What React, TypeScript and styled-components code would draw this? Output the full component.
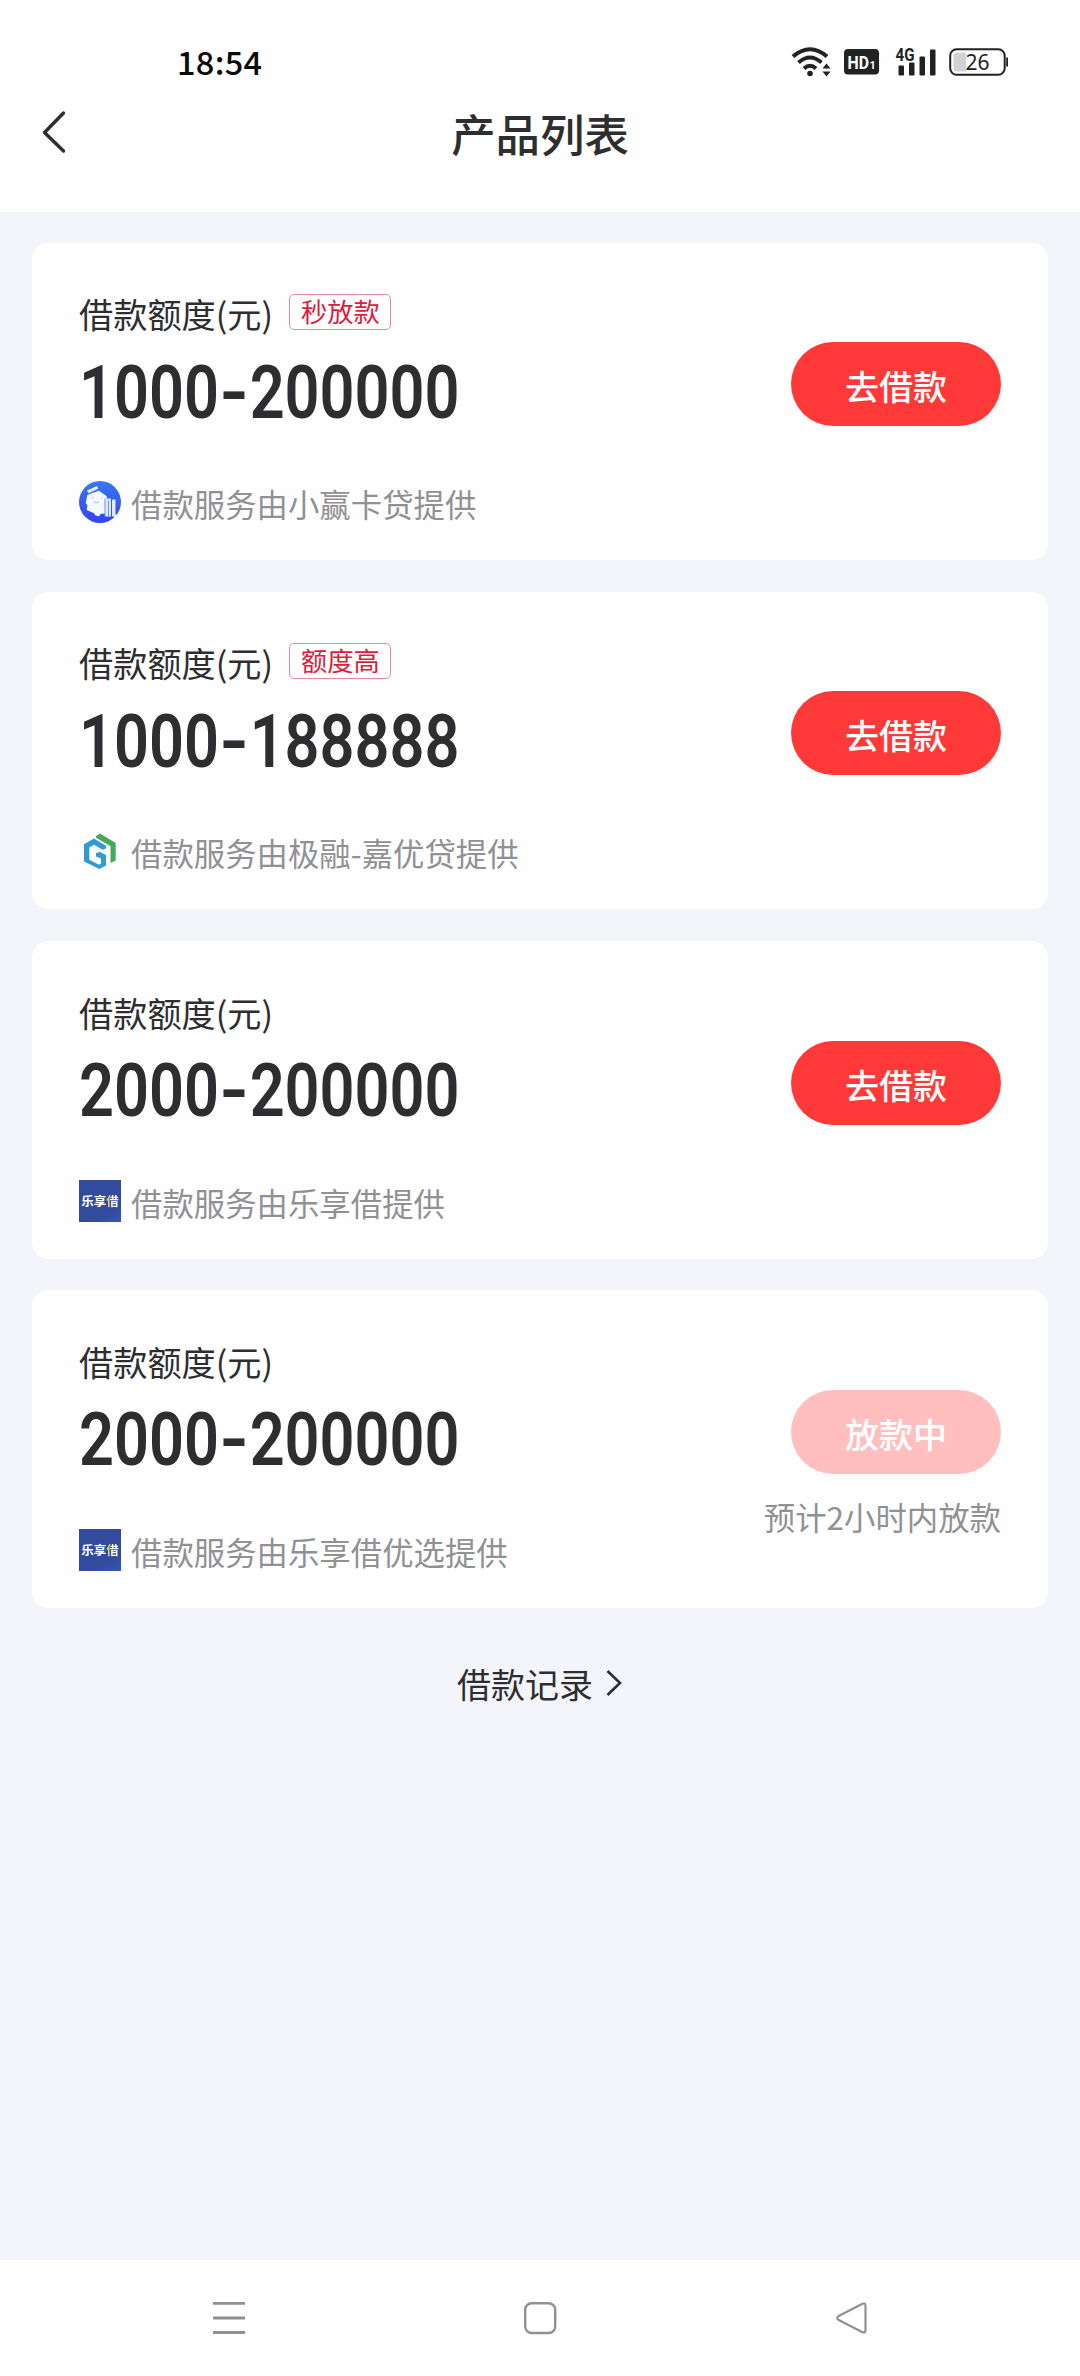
import React from "react";
import styled, { createGlobalStyle } from "styled-components";

const GlobalStyle = createGlobalStyle`
  *, *::before, *::after { box-sizing: border-box; }
  body {
    margin: 0;
    background: #f4f5fa;
    color: #2e2e31;
    font-family: "Noto Sans CJK SC", "Noto Sans", sans-serif;
  }
`;

const Screen = styled.div`
  display: flex;
  flex-direction: column;
  width: 1080px;
  height: 2376px;
  background: #f4f5fa;
`;

const Top = styled.header`
  height: 211.5px;
  background: #fefefe;
`;

const StatusBar = styled.div`
  display: flex;
  align-items: center;
  justify-content: space-between;
  height: 90px;
  padding: 34px 71px 0 177px;
`;

const Clock = styled.span`
  margin-bottom: 3px;
  font: 500 32.5px/40px "Noto Sans CJK SC", sans-serif;
  color: #0b0b0b;
  letter-spacing: 0.3px;
`;

const StatusIcons = styled.div`
  display: flex;
  align-items: center;
  & > svg { overflow: visible; }
`;

const NavHeader = styled.div`
  display: grid;
  grid-template-columns: 120px 1fr 120px;
  align-items: center;
  height: 86px;
`;

const BackButton = styled.button`
  display: flex;
  padding: 0 0 2px 40px;
  border: 0;
  background: none;
`;

const Title = styled.h1`
  margin: 0;
  text-align: center;
  font-size: 44.4px;
  line-height: 86px;
  font-weight: 500;
`;

const List = styled.main`
  flex: 1;
  display: flex;
  flex-direction: column;
  gap: 31.7px;
  padding: 31px 32px 0;
`;

const Card = styled.section`
  display: flex;
  justify-content: space-between;
  height: 317.6px;
  padding: 0 47px;
  border-radius: 16px;
  background: #fefefe;
`;

const Info = styled.div`
  padding-top: 51.5px;
`;

const LabelRow = styled.div`
  display: flex;
  align-items: flex-start;
  gap: 16.3px;
  height: 40px;
`;

const Label = styled.span`
  font-size: 34.2px;
  line-height: 38px;
`;

const Badge = styled.span`
  width: 102px;
  height: 36px;
  border: 1px solid #e58a9c;
  border-radius: 5px;
  text-align: center;
  color: #dd1c3c;
  font-size: 26.3px;
  line-height: 32px;
`;

const Amount = styled.div`
  display: flex;
  width: 380px;
  margin-top: 22.5px;
  font: 650 74.5px/72px Roboto, sans-serif;
  white-space: nowrap;
  transform: scaleX(0.822);
  transform-origin: left center;
`;

const Dash = styled.span`
  margin: 0 5px;
  transform: scaleX(1.28);
`;

const Provider = styled.div`
  display: flex;
  align-items: flex-start;
  gap: 10px;
  height: 42px;
  margin-top: 52.5px;
  color: #919194;
`;

const ProviderText = styled.span`
  font-size: 31.4px;
  line-height: 45px;
  white-space: nowrap;
`;

const Action = styled.div`
  display: flex;
  flex-direction: column;
  align-items: flex-end;
  padding-top: 99.5px;
`;

const Pill = styled.button<{ $pending?: boolean }>`
  width: 210px;
  height: 84px;
  padding: 3px 0 0;
  border: 0;
  border-radius: 42px;
  background: ${(p) => (p.$pending ? "#ffbfbf" : "#ff3938")};
  color: #fff;
  font: 500 34px/81px "Noto Sans CJK SC", sans-serif;
`;

const Note = styled.span`
  margin-top: 21px;
  color: #919194;
  font-size: 31.4px;
  line-height: 44px;
`;

const Records = styled.a`
  display: flex;
  align-items: center;
  justify-content: center;
  gap: 13px;
  height: 50px;
  margin-top: 19px;
  padding-right: 1px;
  font-size: 34px;
  line-height: 50px;
  & > svg { margin-bottom: 2px; }
`;

const SystemNav = styled.nav`
  display: flex;
  justify-content: space-between;
  height: 116px;
  padding: 40px 211px 0;
  background: #fefefe;
`;

const TextLogo = styled.span`
  display: flex;
  align-items: center;
  justify-content: center;
  width: 42px;
  height: 42px;
  background: linear-gradient(150deg, #324b9d 75%, #3559ba);
  color: #fff;
  font-size: 12.5px;
  font-weight: 700;
  line-height: 42px;
`;

const Accent = styled.span`
  background: linear-gradient(100deg, #d9d94a 36%, #fff 37%);
  background-clip: text;
  color: transparent;
`;

const WifiIcon = () => (
  <svg width="40" height="32" viewBox="0 0 40 32" fill="none" stroke="#222" strokeWidth="4">
    <path d="M2 10.5Q19 -4 36 10.5" />
    <path d="M7.5 16.5Q19 6.5 30.5 16.5" />
    <path d="M13 22.5Q19 17 25 22.5" />
    <circle cx="19" cy="27.5" r="2.8" fill="#222" stroke="none" />
    <path d="M35.5 17.5l4 5h-8zM35.5 30.5l4-5h-8z" fill="#222" stroke="none" />
  </svg>
);

const HdIcon = () => (
  <svg width="35" height="26" viewBox="0 0 35 26">
    <rect width="35" height="25.5" rx="4" fill="#222" />
    <text x="3.5" y="19.5" fontFamily="Roboto" fontWeight="700" fontSize="18.5" fill="#fff" textLength="21.5" lengthAdjust="spacingAndGlyphs">HD</text>
    <text x="25.5" y="19.5" fontFamily="Roboto" fontWeight="700" fontSize="11" fill="#fff">1</text>
  </svg>
);

const SignalIcon = () => (
  <svg width="42" height="30" viewBox="0 0 42 30" fill="#222">
    <text x="0.5" y="13.5" fontFamily="Roboto" fontWeight="700" fontSize="17.5" textLength="19" lengthAdjust="spacingAndGlyphs">4G</text>
    <rect x="3.5" y="18.5" width="5.5" height="10" rx="1" />
    <rect x="14" y="15.5" width="5.5" height="13" rx="1" />
    <rect x="24.5" y="9.5" width="5.5" height="19" rx="1" />
    <rect x="35" y="2.5" width="5.5" height="26" rx="1" />
  </svg>
);

const BatteryIcon = () => (
  <svg width="60" height="28" viewBox="0 0 60 28">
    <rect x="1.2" y="1.2" width="54.5" height="25.6" rx="6.5" fill="none" stroke="#222" strokeWidth="2" />
    <path d="M17 4.5H8a3.5 3.5 0 0 0-3.5 3.5v12a3.5 3.5 0 0 0 3.5 3.5h9z" fill="#d2d2d2" />
    <path d="M57.2 9.5h1.8v9h-1.8z" fill="#222" />
    <text x="16.5" y="21.5" fontFamily="Noto Sans" fontSize="21" fill="#222">26</text>
  </svg>
);

const HouseLogo = () => (
  <svg width="42" height="42" viewBox="0 0 42 42">
    <defs>
      <linearGradient id="houseBlue" x1="0" y1="0" x2="0" y2="1">
        <stop offset="0" stopColor="#3878ee" />
        <stop offset="1" stopColor="#3442ee" />
      </linearGradient>
    </defs>
    <circle cx="21" cy="21" r="21" fill="url(#houseBlue)" />
    <path d="M8 9.5l10-4.5 1.2 2.7-9.7 4.6z" fill="#e9f1ff" />
    <path d="M9 14.5L20 10.5 27 15.5 26.5 32H21.5L19.5 34.5 16.5 33.5 15.5 31.5 8.5 28.5 9.3 24 7.5 22z" fill="#f4f8ff" stroke="#f4f8ff" strokeWidth="1.5" strokeLinejoin="round" />
    <path d="M14.5 20.5q2 2.5 5.5.5M22 17.5l1.5-.8M13 16.8l1.5-.3" fill="none" stroke="#a9bdf6" strokeWidth="1" />
    <path d="M26 17.5h6v18h-6zM33 18.5h3.5v17H33z" fill="#dfe9ff" />
    <path d="M26 17.5v18M29.5 20v15" stroke="#6d92f2" strokeWidth="1" />
    <path d="M36.5 33.5h3l-3 2.5h-2z" fill="#e9f1ff" />
  </svg>
);

const HexLogo = () => (
  <svg width="42" height="42" viewBox="0 0 42 42">
    <path d="M17 6L21 3.5 36.7 13V30.5L31.5 33V16.2L17 7.8z" fill="#45a95b" />
    <path d="M14.8 8.5L27 15.8V18.5L23.5 19.8 15 14.7 10.3 17.5V29.8L20 34.7 22 33.5V28.5L17 26.5V23L21 22 27 25V35.5L20.5 39 5 31.5V14.2z" fill="#309cd2" />
  </svg>
);

const WordLogo = () => (
  <TextLogo>
    乐享<Accent>借</Accent>
  </TextLogo>
);

interface Product {
  amount: [string, string];
  tag?: string;
  provider: string;
  Logo: React.FC;
  pending?: boolean;
}

const products: Product[] = [
  { amount: ["1000", "200000"], tag: "秒放款", provider: "小赢卡贷", Logo: HouseLogo },
  { amount: ["1000", "188888"], tag: "额度高", provider: "极融-嘉优贷", Logo: HexLogo },
  { amount: ["2000", "200000"], provider: "乐享借", Logo: WordLogo },
  { amount: ["2000", "200000"], provider: "乐享借优选", Logo: WordLogo, pending: true },
];

const ProductCard = ({ amount, tag, provider, Logo, pending }: Product) => (
  <Card>
    <Info>
      <LabelRow>
        <Label>借款额度(元)</Label>
        {tag && <Badge>{tag}</Badge>}
      </LabelRow>
      <Amount>
        {amount[0]}
        <Dash>-</Dash>
        {amount[1]}
      </Amount>
      <Provider>
        <Logo />
        <ProviderText>借款服务由{provider}提供</ProviderText>
      </Provider>
    </Info>
    <Action>
      <Pill $pending={pending}>{pending ? "放款中" : "去借款"}</Pill>
      {pending && <Note>预计2小时内放款</Note>}
    </Action>
  </Card>
);

const Gap = styled.span<{ $w: number }>`
  width: ${(p) => p.$w}px;
`;

export default function App() {
  return (
    <Screen>
      <GlobalStyle />
      <Top>
        <StatusBar>
          <Clock>18:54</Clock>
          <StatusIcons>
            <WifiIcon />
            <Gap $w={13} />
            <HdIcon />
            <Gap $w={16} />
            <SignalIcon />
            <Gap $w={12} />
            <BatteryIcon />
          </StatusIcons>
        </StatusBar>
        <NavHeader>
          <BackButton aria-label="返回">
            <svg width="28" height="44" viewBox="0 0 28 44" fill="none" stroke="#2e2e31" strokeWidth="3.4" strokeLinecap="round" strokeLinejoin="round">
              <path d="M23.5 3L4.5 22.5 23.5 41" />
            </svg>
          </BackButton>
          <Title>产品列表</Title>
        </NavHeader>
      </Top>
      <List>
        {products.map((p) => (
          <ProductCard key={p.provider} {...p} />
        ))}
        <Records>
          借款记录
          <svg width="16" height="28" viewBox="0 0 16 28" fill="none" stroke="#2e2e31" strokeWidth="2.6">
            <path d="M1.5 2L14 14 1.5 26" />
          </svg>
        </Records>
      </List>
      <SystemNav>
        <svg width="36" height="36" viewBox="0 0 36 36" stroke="#919191" strokeWidth="2.8">
          <path d="M2 3.3H34M2 18H34M2 32.5H34" />
        </svg>
        <svg width="36" height="36" viewBox="0 0 36 36" fill="none" stroke="#919191" strokeWidth="2.4">
          <rect x="3.2" y="3.2" width="30" height="29.8" rx="6.5" />
        </svg>
        <svg width="36" height="36" viewBox="0 0 36 36" fill="none" stroke="#919191" strokeWidth="2.2" strokeLinejoin="round">
          <path d="M29.5 3.8L5.2 16.2Q3.3 18 5.2 19.8L29.5 32.3Q32.5 33 32.5 30.5V5.5Q32.5 3 29.5 3.8Z" />
        </svg>
      </SystemNav>
    </Screen>
  );
}
